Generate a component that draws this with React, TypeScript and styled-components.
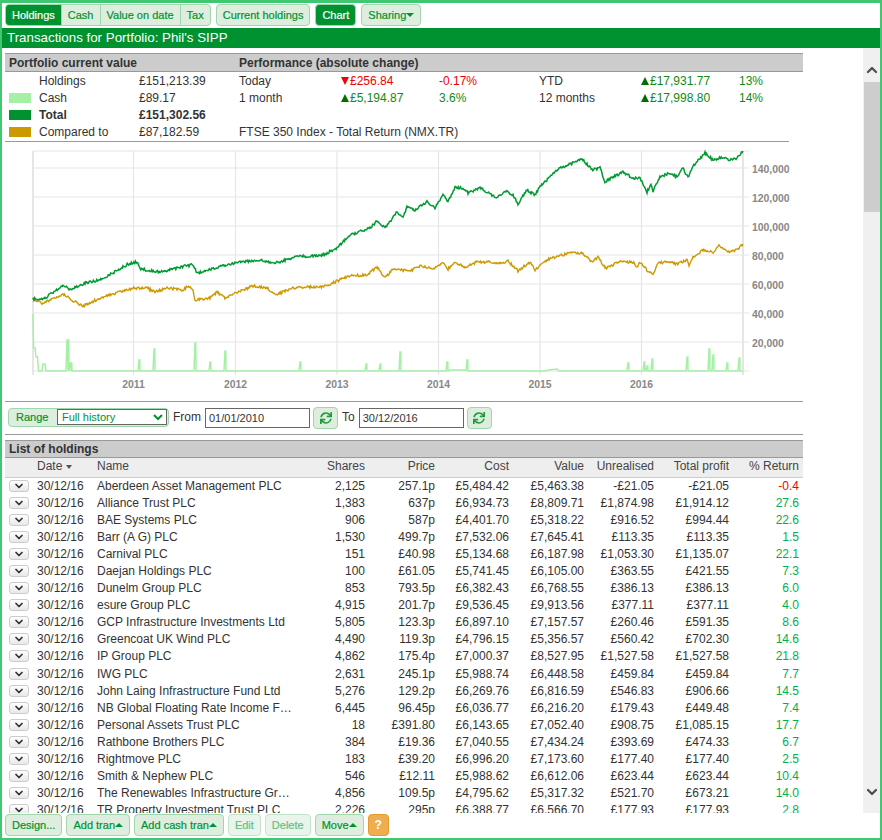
import React from "react";
import styled, { createGlobalStyle } from "styled-components";
import { ChevronDown, ChevronUp } from "lucide-react";
import { FaSync } from "react-icons/fa";

type Holding = [string, string, string, string, string, string, string, string];

const holdings: Holding[] = [
  ["Aberdeen Asset Management PLC", "2,125", "257.1p", "£5,484.42", "£5,463.38", "-£21.05", "-£21.05", "-0.4"],
  ["Alliance Trust PLC", "1,383", "637p", "£6,934.73", "£8,809.71", "£1,874.98", "£1,914.12", "27.6"],
  ["BAE Systems PLC", "906", "587p", "£4,401.70", "£5,318.22", "£916.52", "£994.44", "22.6"],
  ["Barr (A G) PLC", "1,530", "499.7p", "£7,532.06", "£7,645.41", "£113.35", "£113.35", "1.5"],
  ["Carnival PLC", "151", "£40.98", "£5,134.68", "£6,187.98", "£1,053.30", "£1,135.07", "22.1"],
  ["Daejan Holdings PLC", "100", "£61.05", "£5,741.45", "£6,105.00", "£363.55", "£421.55", "7.3"],
  ["Dunelm Group PLC", "853", "793.5p", "£6,382.43", "£6,768.55", "£386.13", "£386.13", "6.0"],
  ["esure Group PLC", "4,915", "201.7p", "£9,536.45", "£9,913.56", "£377.11", "£377.11", "4.0"],
  ["GCP Infrastructure Investments Ltd", "5,805", "123.3p", "£6,897.10", "£7,157.57", "£260.46", "£591.35", "8.6"],
  ["Greencoat UK Wind PLC", "4,490", "119.3p", "£4,796.15", "£5,356.57", "£560.42", "£702.30", "14.6"],
  ["IP Group PLC", "4,862", "175.4p", "£7,000.37", "£8,527.95", "£1,527.58", "£1,527.58", "21.8"],
  ["IWG PLC", "2,631", "245.1p", "£5,988.74", "£6,448.58", "£459.84", "£459.84", "7.7"],
  ["John Laing Infrastructure Fund Ltd", "5,276", "129.2p", "£6,269.76", "£6,816.59", "£546.83", "£906.66", "14.5"],
  ["NB Global Floating Rate Income Fund Ltd", "6,445", "96.45p", "£6,036.77", "£6,216.20", "£179.43", "£449.48", "7.4"],
  ["Personal Assets Trust PLC", "18", "£391.80", "£6,143.65", "£7,052.40", "£908.75", "£1,085.15", "17.7"],
  ["Rathbone Brothers PLC", "384", "£19.36", "£7,040.55", "£7,434.24", "£393.69", "£474.33", "6.7"],
  ["Rightmove PLC", "183", "£39.20", "£6,996.20", "£7,173.60", "£177.40", "£177.40", "2.5"],
  ["Smith & Nephew PLC", "546", "£12.11", "£5,988.62", "£6,612.06", "£623.44", "£623.44", "10.4"],
  ["The Renewables Infrastructure Group Ltd", "4,856", "109.5p", "£4,795.62", "£5,317.32", "£521.70", "£673.21", "14.0"],
  ["TR Property Investment Trust PLC", "2,226", "295p", "£6,388.77", "£6,566.70", "£177.93", "£177.93", "2.8"],
];

const greenPoints: number[][] = [
  [33,299],[45,298],[63,285],[70,290],[85,283],[100,280],[118,270],[128,264],[137,262],[140,269],[160,272],[185,266],[193,265],[197,273],[215,268],[240,262],[260,260],[275,263],[295,257],
  [323,255],[337,248],[350,235],[370,228],[377,221],[385,228],[397,212],[403,217],[407,207],[415,210],[427,202],[435,208],[443,195],[448,202],[455,187],[463,188],[468,193],[480,188],[497,198],[505,191],[513,195],[518,204],[527,190],[535,195],[540,187],[550,177],[560,168],[570,164],[582,159],[592,170],
  [600,168],[605,182],[613,177],[623,172],[633,178],[640,178],[647,192],[651,184],[653,191],[660,177],[670,173],[677,177],[683,168],[688,178],[693,166],[705,153],[713,160],[722,157],[730,160],[737,158],[743,151],
];

const goldPoints: number[][] = [
  [33,299],[42,303],[60,296],[63,294],[72,300],[83,306],[98,299],[110,295],[133,288],[147,288],[155,292],[167,288],[183,290],[188,286],[193,290],[195,300],[210,298],[217,292],[225,298],[233,294],[253,286],[267,288],[275,295],[290,289],[300,287],
  [323,287],[337,281],[350,276],[367,275],[377,267],[385,278],[393,269],[410,271],[420,266],[433,269],[443,263],[448,269],[455,262],[465,267],[477,262],[493,262],[500,264],[508,261],[518,271],[530,262],[535,270],[547,260],[558,256],[570,253],[582,253],[592,262],
  [598,257],[605,268],[613,265],[618,262],[633,262],[637,267],[640,262],[647,270],[653,274],[658,263],[670,262],[677,264],[687,260],[689,267],[693,257],[703,250],[713,252],[719,246],[728,252],[737,250],[743,244],
];

const cashSpikes: number[][] = [
  [67,340],[68,340],[70,363],[71,363],[139,360],[154,349],[195,343],[210,362],[225,351],[300,362],[366,364],[380,364],[400,352],[447,362],[467,360],
  [628,363],[644,362],[647,366],[652,359],[687,357],[709,349],[713,355],[727,363],[739,358],
];

const gridY = [151, 168, 197, 226, 255, 284, 313, 342, 371];
const yearLines = [133.5, 235.5, 337, 438.5, 540, 641.5];

// jagged line through the control points, same result on every render
function jagged(points: number[][], seed: number) {
  let state = seed;
  const next = () => {
    state = (state * 16807) % 2147483647;
    return state / 2147483647 - 0.5;
  };
  const out: string[] = [];
  for (let i = 0; i < points.length - 1; i++) {
    const [x0, y0] = points[i];
    const [x1, y1] = points[i + 1];
    const steps = Math.max(1, Math.round((x1 - x0) * 1.2));
    for (let s = 0; s < steps; s++) {
      const t = s / steps;
      out.push(`${(x0 + (x1 - x0) * t).toFixed(1)},${(y0 + (y1 - y0) * t + next() * 2.6).toFixed(1)}`);
    }
  }
  const last = points[points.length - 1];
  out.push(`${last[0]},${last[1]}`);
  return "M" + out.join("L");
}

function cashPath() {
  let d = "M33,314L33.6,348L35,348L36,357L37.5,357L38.5,371L42,371L43,364L45,364L46,371";
  let lastX = 46;
  for (const [x, y] of cashSpikes) {
    if (x - 1 > lastX) d += `L${x - 1},371`;
    d += `L${x},${y}L${x + 0.8},${y}`;
    lastX = x + 1;
    d += `L${lastX},371`;
    if (x === 447) d += "L450,370L466,370";
  }
  return (d + "L743,371").replace("L627,371", "L545,371L549,370L557,369L559,371L627,371");
}

function Chart() {
  return (
    <ChartSvg viewBox="5 142 798 259">
      {gridY.map(y => <line key={y} x1={33} x2={749} y1={y} y2={y} stroke="#e6e6e6" strokeWidth={1.2} />)}
      <line x1={33} x2={33} y1={151} y2={375} stroke="#e6e6e6" strokeWidth={2} />
      <line x1={743} x2={743} y1={151} y2={375} stroke="#e6e6e6" strokeWidth={2} />
      {yearLines.map(x => <line key={x} x1={x} x2={x} y1={151} y2={375} stroke="#e6e6e6" strokeWidth={1.2} />)}
      <path d={cashPath()} fill="none" stroke="#a6f0a6" strokeWidth={1.5} />
      <path d={jagged(goldPoints, 4711)} fill="none" stroke="#cc9900" strokeWidth={1.4} />
      <path d={jagged(greenPoints, 1931)} fill="none" stroke="#009933" strokeWidth={1.5} />
      {[140, 120, 100, 80, 60, 40, 20].map((v, i) => (
        <AxisText key={v} x={752} y={gridY[i + 1] + 5}>{v},000</AxisText>
      ))}
      {yearLines.map((x, i) => (
        <AxisText key={x} x={x} y={388} textAnchor="middle">{2011 + i}</AxisText>
      ))}
    </ChartSvg>
  );
}

export default function App() {
  return (
    <>
      <GlobalStyle />
      <Frame>
        <Toolbar>
          <TabGroup>
            <Tab $active>Holdings</Tab>
            <Tab>Cash</Tab>
            <Tab>Value on date</Tab>
            <Tab>Tax</Tab>
          </TabGroup>
          <ToolButton>Current holdings</ToolButton>
          <ToolButton $active>Chart</ToolButton>
          <ToolButton>Sharing<Caret /></ToolButton>
        </Toolbar>
        <TitleBar>Transactions for Portfolio: Phil's SIPP</TitleBar>
        <Body>
          <Content>
            <SectionHeader>
              <span>Portfolio current value</span>
              <span>Performance (absolute change)</span>
            </SectionHeader>
            <Summary>
              <Swatch />
              <span>Holdings</span>
              <span>£151,213.39</span>
              <span>Today</span>
              <Change $tone="down"><Arrow $down />£256.84</Change>
              <Change $tone="down">-0.17%</Change>
              <span>YTD</span>
              <Change $tone="up"><Arrow />£17,931.77</Change>
              <Change $tone="up">13%</Change>

              <Swatch $color="#a6f0a6" />
              <span>Cash</span>
              <span>£89.17</span>
              <span>1 month</span>
              <Change $tone="up"><Arrow />£5,194.87</Change>
              <Change $tone="up">3.6%</Change>
              <span>12 months</span>
              <Change $tone="up"><Arrow />£17,998.80</Change>
              <Change $tone="up">14%</Change>

              <Swatch $color="#009230" />
              <strong>Total</strong>
              <strong>£151,302.56</strong>
              <Blank />

              <Swatch $color="#cc9900" />
              <span>Compared to</span>
              <span>£87,182.59</span>
              <Wide>FTSE 350 Index - Total Return (NMX.TR)</Wide>
            </Summary>
            <ChartWrap>
              <Chart />
            </ChartWrap>
            <RangeBar>
              <RangeGroup>
                <RangeLabel>Range</RangeLabel>
                <RangeSelect defaultValue="Full history">
                  <option>Full history</option>
                  <option>1 year</option>
                  <option>5 years</option>
                </RangeSelect>
              </RangeGroup>
              <DateLabel>From</DateLabel>
              <DateInput defaultValue="01/01/2010" />
              <RefreshButton><FaSync size={12} /></RefreshButton>
              <DateLabel>To</DateLabel>
              <DateInput defaultValue="30/12/2016" />
              <RefreshButton><FaSync size={12} /></RefreshButton>
            </RangeBar>
            <ListHeader>List of holdings</ListHeader>
            <Table>
              <colgroup>
                {[28, 60, 200, 76, 70, 74, 75, 70, 75, 70].map((w, i) => <col key={i} style={{ width: w }} />)}
              </colgroup>
              <thead>
                <tr>
                  <th />
                  <LeftHead>Date<SortMark /></LeftHead>
                  <LeftHead>Name</LeftHead>
                  <th>Shares</th>
                  <th>Price</th>
                  <th>Cost</th>
                  <th>Value</th>
                  <th>Unrealised</th>
                  <th>Total profit</th>
                  <th>% Return</th>
                </tr>
              </thead>
              <tbody>
                {holdings.map(h => (
                  <tr key={h[0]}>
                    <ButtonCell><RowButton><ChevronDown size={12} strokeWidth={3.5} /></RowButton></ButtonCell>
                    <LeftCell>30/12/16</LeftCell>
                    <NameCell>{h[0]}</NameCell>
                    <td>{h[1]}</td>
                    <td>{h[2]}</td>
                    <td>{h[3]}</td>
                    <td>{h[4]}</td>
                    <td>{h[5]}</td>
                    <td>{h[6]}</td>
                    <ReturnCell $negative={h[7].startsWith("-")}>{h[7]}</ReturnCell>
                  </tr>
                ))}
              </tbody>
            </Table>
          </Content>
          <ScrollBar>
            <ScrollArrow $top><ChevronUp size={16} strokeWidth={3.5} /></ScrollArrow>
            <ScrollTrack><ScrollThumb /></ScrollTrack>
            <ScrollArrow><ChevronDown size={16} strokeWidth={3.5} /></ScrollArrow>
          </ScrollBar>
        </Body>
        <Footer>
          <ToolButton>Design...</ToolButton>
          <ToolButton>Add tran<Caret $up /></ToolButton>
          <ToolButton>Add cash tran<Caret $up /></ToolButton>
          <ToolButton disabled>Edit</ToolButton>
          <ToolButton disabled>Delete</ToolButton>
          <ToolButton>Move<Caret $up /></ToolButton>
          <HelpButton>?</HelpButton>
        </Footer>
      </Frame>
    </>
  );
}

const GlobalStyle = createGlobalStyle`
  html, body { margin: 0; padding: 0; background: #fff; }
  body { font-family: "Liberation Sans", Arial, sans-serif; font-size: 12px; color: #333; }
  * { box-sizing: border-box; }
`;

const Frame = styled.div`
  width: 882px;
  height: 840px;
  display: flex;
  flex-direction: column;
  border-style: solid;
  border-color: #3fc871;
  border-width: 3px 2px 2px 2px;
  background: #fff;
  overflow: hidden;
`;

const Toolbar = styled.div`
  height: 25px;
  flex: none;
  display: flex;
  align-items: flex-start;
  gap: 5px;
  padding: 1px 0 0 3px;
`;

const TabGroup = styled.div`
  display: flex;
  height: 22px;
  border: 1px solid #9fd6ab;
  border-radius: 4px;
  overflow: hidden;
  background: #deeede;
`;

const Tab = styled.div<{ $active?: boolean }>`
  display: flex;
  align-items: center;
  padding: 0 6px;
  font-size: 11px;
  -webkit-text-stroke: 0.2px;
  color: ${p => (p.$active ? "#fff" : "#009230")};
  background: ${p => (p.$active ? "#009230" : "transparent")};
  border-left: 1px solid ${p => (p.$active ? "#009230" : "#9fd6ab")};
  &:first-child { border-left: 0; }
`;

const ToolButton = styled.button<{ $active?: boolean }>`
  height: 22px;
  padding: 0 6px;
  display: inline-flex;
  align-items: center;
  font-family: inherit;
  font-size: 11px;
  -webkit-text-stroke: 0.2px;
  border-radius: 4px;
  border: 1px solid #9fd6ab;
  color: ${p => (p.$active ? "#fff" : "#009230")};
  background: ${p => (p.$active ? "#009230" : "#deeede")};
  &:disabled {
    color: #66be83;
    background: #e9f4ea;
    border-color: #c2e5c9;
  }
`;

const Caret = styled.span<{ $up?: boolean }>`
  width: 0;
  height: 0;
  border-left: 4px solid transparent;
  border-right: 4px solid transparent;
  ${p => (p.$up ? "border-bottom: 4px solid #009230;" : "border-top: 4px solid #009230;")}
`;

const TitleBar = styled.div`
  height: 20px;
  flex: none;
  display: flex;
  align-items: center;
  padding: 0 0 1px 5px;
  background: #009230;
  color: #fff;
  font-size: 13.33px;
`;

const Body = styled.div`
  flex: 1;
  min-height: 0;
  display: flex;
`;

const Content = styled.div`
  width: 798px;
  margin-left: 3px;
  margin-right: 60px;
  padding-top: 5px;
  overflow: hidden;
`;

const SectionHeader = styled.div`
  height: 19px;
  display: grid;
  grid-template-columns: 230px 1fr;
  align-items: center;
  padding-left: 4px;
  background: #ccc;
  border-top: 1px solid #999;
  border-bottom: 1px solid #999;
  font-weight: bold;
  color: #333;
`;

const Summary = styled.div`
  width: 784px;
  display: grid;
  grid-template-columns: 34px 100px 100px 101px 99px 100px 101px 99px 50px;
  grid-auto-rows: 17px;
  align-items: center;
  height: 70px;
  border-bottom: 1px solid #999;
`;

const Swatch = styled.div<{ $color?: string }>`
  width: 22px;
  height: 10px;
  margin-left: 4px;
  background: ${p => p.$color ?? "transparent"};
`;

const Change = styled.span<{ $tone: "up" | "down" }>`
  color: ${p => (p.$tone === "up" ? "#118a11" : "#f00000")};
`;

const Arrow = styled.span<{ $down?: boolean }>`
  display: inline-block;
  width: 0;
  height: 0;
  margin: 0 1px 0 1px;
  border-left: 4px solid transparent;
  border-right: 4px solid transparent;
  ${p => (p.$down ? "border-top: 8px solid #f00000;" : "border-bottom: 8px solid #006e00;")}
`;

const Blank = styled.div`
  grid-column: 4 / -1;
`;

const Wide = styled.span`
  grid-column: 4 / -1;
`;

const ChartWrap = styled.div`
  height: 260px;
  border-bottom: 1px solid #999;
`;

const ChartSvg = styled.svg`
  display: block;
  width: 798px;
  height: 259px;
`;

const AxisText = styled.text`
  font-family: "Liberation Sans", Arial, sans-serif;
  font-size: 10.4px;
  font-weight: bold;
  fill: #888;
`;

const RangeBar = styled.div`
  height: 33px;
  display: flex;
  align-items: center;
  padding-left: 3px;
  border-bottom: 1px solid #999;
`;

const RangeGroup = styled.div`
  width: 161px;
  height: 19px;
  margin-bottom: 2px;
  display: flex;
  align-items: center;
  justify-content: space-between;
  padding: 0 1px 0 7px;
  background: #deeede;
  border: 1px solid #9fd6ab;
  border-radius: 4px;
`;

const RangeLabel = styled.span`
  font-size: 11px;
  -webkit-text-stroke: 0.2px;
  color: #009230;
`;

const RangeSelect = styled.select`
  width: 110px;
  height: 16px;
  padding: 0;
  font-family: inherit;
  font-size: 11px;
  color: #009230;
  background: #fff;
  border: 1px solid #666;
  border-radius: 0;
`;

const DateLabel = styled.span`
  margin: 0 4px 3px 4px;
  color: #333;
`;

const DateInput = styled.input`
  width: 105px;
  height: 20px;
  padding: 0 3px;
  font-family: inherit;
  font-size: 11px;
  color: #333;
  border: 1px solid #666;
  border-radius: 0;
`;

const RefreshButton = styled.button`
  width: 25px;
  height: 22px;
  margin-left: 3px;
  padding: 0;
  display: flex;
  align-items: center;
  justify-content: center;
  color: #1e9c3c;
  background: #deeede;
  border: 1px solid #9fd6ab;
  border-radius: 4px;
`;

const ListHeader = styled(SectionHeader)`
  display: flex;
  height: 18px;
  margin-top: 5px;
`;

const Table = styled.table`
  width: 798px;
  table-layout: fixed;
  border-collapse: collapse;

  th {
    height: 19px;
    padding: 0 4px 2px 0;
    font-weight: normal;
    text-align: right;
    color: #444;
    background: #eee;
    border-bottom: 1px solid #ccc;
  }
  td {
    height: 17.1px;
    padding: 0 4px 0 0;
    text-align: right;
    white-space: nowrap;
    color: #333;
  }
`;

const LeftHead = styled.th`
  && { text-align: left; padding-left: 4px; }
`;

const SortMark = styled.span`
  display: inline-block;
  width: 0;
  height: 0;
  margin-left: 4px;
  vertical-align: 1px;
  border-left: 3px solid transparent;
  border-right: 3px solid transparent;
  border-top: 4px solid #555;
`;

const ButtonCell = styled.td`
  && { padding: 0 0 0 4px; text-align: left; }
`;

const RowButton = styled.button`
  width: 20px;
  height: 12px;
  padding: 0;
  display: flex;
  align-items: center;
  justify-content: center;
  color: #333;
  background: linear-gradient(#fff, #e8e8e8);
  border: 1px solid #ccc;
  border-radius: 3px;
`;

const LeftCell = styled.td`
  && { padding-left: 4px; text-align: left; }
`;

const NameCell = styled(LeftCell)`
  && { padding-right: 0; overflow: hidden; text-overflow: ellipsis; }
`;

const ReturnCell = styled.td<{ $negative: boolean }>`
  && { color: ${p => (p.$negative ? "#f00000" : "#00b050")}; }
`;

const ScrollBar = styled.div`
  width: 17px;
  flex: none;
  display: flex;
  flex-direction: column;
  background: #f0f0f0;
`;

const ScrollArrow = styled.div<{ $top?: boolean }>`
  height: 34px;
  flex: none;
  display: flex;
  justify-content: center;
  color: #505050;
  padding: ${p => (p.$top ? "14px 0 0" : "5px 0 0")};
`;

const ScrollTrack = styled.div`
  flex: 1;
  padding-left: 1px;
`;

const ScrollThumb = styled.div`
  height: 130px;
  background: #cdcdcd;
`;

const Footer = styled.div`
  height: 25px;
  flex: none;
  display: flex;
  align-items: flex-start;
  gap: 4px;
  padding: 1px 0 0 3px;
`;

const HelpButton = styled.button`
  width: 21px;
  height: 22px;
  padding: 0;
  font-family: inherit;
  font-size: 12px;
  font-weight: bold;
  color: #fff;
  background: #f0ad4e;
  border: 1px solid #e59a2f;
  border-radius: 4px;
`;
